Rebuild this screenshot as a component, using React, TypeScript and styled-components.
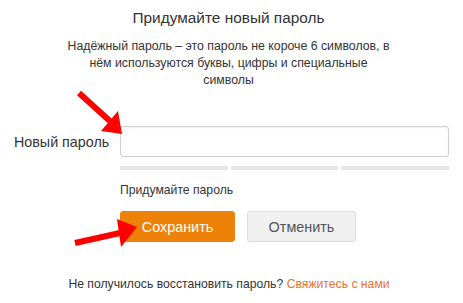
import React from "react";
import styled, { createGlobalStyle } from "styled-components";

const Global = createGlobalStyle`
  html, body { margin: 0; padding: 0; background: #fff; }
  body { font-family: "Liberation Sans", Arial, sans-serif; color: #333; }
`;

const Page = styled.div`
  position: relative;
  width: 463px;
  height: 303px;
  box-sizing: border-box;
  padding-top: 8px;
  display: flex;
  flex-direction: column;
  align-items: stretch;
`;

const Title = styled.h1`
  margin: 0 0 0 -6px;
  font-size: 15.4px;
  line-height: 20px;
  font-weight: normal;
  text-align: center;
  color: #333;
`;

const Description = styled.p`
  margin: 10px auto 0;
  width: 328px;
  font-size: 12.3px;
  line-height: 17px;
  text-align: center;
  color: #333;
  transform: translateX(-3px);
`;

const FormRow = styled.div`
  margin-top: 37px;
  display: grid;
  grid-template-columns: 94px 1fr;
  align-items: center;
  column-gap: 12px;
  padding: 0 14px;
`;

const Label = styled.label`
  font-size: 14.3px;
  text-align: right;
  color: #333;
  white-space: nowrap;
`;

const Input = styled.input`
  display: block;
  width: 100%;
  min-width: 0;
  height: 31px;
  box-sizing: border-box;
  border: 1px solid #cfcfcf;
  border-radius: 3px;
  box-shadow: inset 0 1px 2px rgba(0,0,0,0.06);
  outline: none;
  font-family: inherit;
  font-size: 14px;
  padding: 0 8px;
  margin: 0;
`;

const Field = styled.div`
  margin-left: 120px;
  margin-right: 14px;
  display: flex;
  flex-direction: column;
`;

const Bars = styled.div`
  margin-top: 9px;
  display: grid;
  grid-template-columns: 1fr 1fr 1fr;
  gap: 3px;
`;

const Bar = styled.div`
  height: 4px;
  background: #e6e6e6;
`;

const Hint = styled.div`
  margin-top: 13px;
  font-size: 12.2px;
  line-height: 15px;
  color: #333;
`;

const Buttons = styled.div`
  margin-top: 13px;
  display: flex;
  gap: 12px;
`;

const Button = styled.button<{ $primary?: boolean }>`
  height: 31px;
  box-sizing: border-box;
  width: ${(p) => (p.$primary ? "115px" : "109px")};
  border-radius: 3px;
  border: 1px solid ${(p) => (p.$primary ? "#ee8208" : "#dcdcdc")};
  background: ${(p) => (p.$primary ? "#ee8208" : "#f0f0f0")};
  color: ${(p) => (p.$primary ? "#fff" : "#555")};
  font-family: inherit;
  font-size: 14.4px;
  padding: 0;
  cursor: pointer;
`;

const Footer = styled.p`
  margin: 35px 0 0 -5px;
  font-size: 12.2px;
  line-height: 15px;
  text-align: center;
  color: #333;
`;

const Link = styled.a`
  color: #eb722e;
  text-decoration: none;
`;

const Overlay = styled.svg`
  position: absolute;
  left: 0;
  top: 0;
  pointer-events: none;
`;

export default function App() {
  return (
    <>
      <Global />
      <Page>
        <Title>Придумайте новый пароль</Title>
        <Description>
          Надёжный пароль – это пароль не короче 6 символов, в нём используются буквы, цифры и специальные символы
        </Description>
        <FormRow>
          <Label>Новый пароль</Label>
          <Input type="password" />
        </FormRow>
        <Field>
          <Bars>
            <Bar />
            <Bar />
            <Bar />
          </Bars>
          <Hint>Придумайте пароль</Hint>
          <Buttons>
            <Button $primary>Сохранить</Button>
            <Button>Отменить</Button>
          </Buttons>
        </Field>
        <Footer>
          Не получилось восстановить пароль? <Link href="#">Свяжитесь с нами</Link>
        </Footer>
        <Overlay width="463" height="303" viewBox="0 0 463 303">
          <line x1="79" y1="93" x2="111" y2="122" stroke="#f00" strokeWidth="6" />
          <polygon points="122,134 101,131 118,111" fill="#f00" />
          <line x1="75" y1="243" x2="120" y2="233" stroke="#f00" strokeWidth="6" />
          <polygon points="137,227 117,219 121,247" fill="#f00" />
        </Overlay>
      </Page>
    </>
  );
}
